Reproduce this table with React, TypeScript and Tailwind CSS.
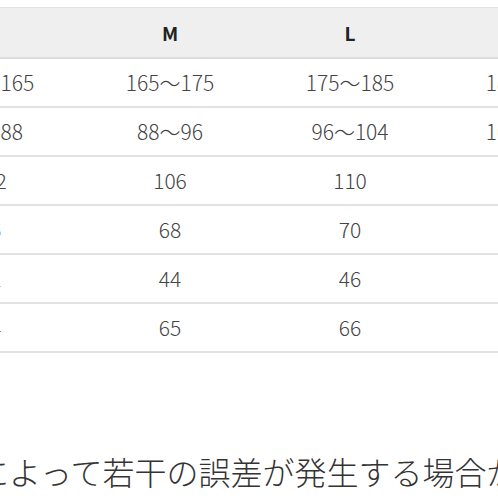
const sizes = ["S", "M", "L", "XL"];

const rows: string[][] = [
  ["155～165", "165～175", "175～185", "185～195"],
  ["80～88", "88～96", "96～104", "104～112"],
  ["102", "106", "110", "114"],
  ["66", "68", "70", "72"],
  ["42", "44", "46", "48"],
  ["64", "65", "66", "67"],
];

export default function App() {
  return (
    <div
      className="w-[498px] h-[498px] overflow-hidden bg-white"
      style={{ fontFamily: '"Noto Sans CJK JP", "Noto Sans", sans-serif' }}
    >
      <table className="ml-[-100px] mt-[7px] w-[720px] border-collapse table-fixed">
        <thead>
          <tr className="h-[50px] bg-[#efefef] border-t border-[#e3e3e3] border-b-2 border-b-[#dcdcdc]">
            {sizes.map((s) => (
              <th key={s} className="w-[180px] text-center text-[19px] font-bold text-[#222] pt-[1px]">
                {s}
              </th>
            ))}
          </tr>
        </thead>
        <tbody>
          {rows.map((r, i) => (
            <tr key={i} className="h-[49px] border-b-2 border-[#e2e2e2]">
              {r.map((c, j) => (
                <td key={j} className="text-center text-[21px] font-light text-[#444] pt-[1px]">
                  {c}
                </td>
              ))}
            </tr>
          ))}
        </tbody>
      </table>

      <p className="ml-[-23px] mt-[94px] whitespace-nowrap text-[32px] leading-[48px] font-light text-[#333]">
        によって若干の誤差が発生する場合があります。
      </p>
    </div>
  );
}
